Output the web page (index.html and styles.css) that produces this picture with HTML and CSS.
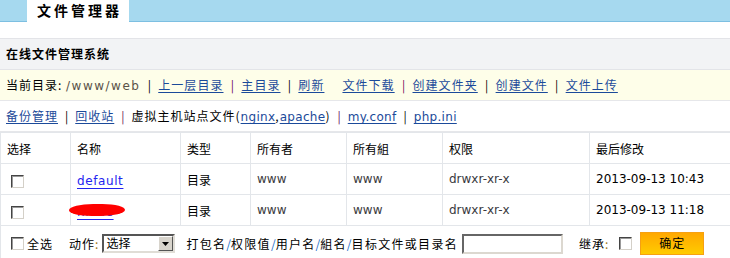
FILE: index.html
```html
<!DOCTYPE html>
<html lang="zh">
<head>
<meta charset="utf-8">
<title>文件管理器</title>
<link rel="stylesheet" href="styles.css">
</head>
<body>
<div class="topbar">
  <div class="tab">文件管理器</div>
</div>
<div class="spacer"></div>
<div class="title">在线文件管理系统</div>
<div class="nav nav-yellow">
  <span class="label">当前目录:</span>&nbsp;<span class="path">/www/web</span><span class="sep">|</span><a href="#">上一层目录</a><span class="sep purple">|</span><a href="#">主目录</a><span class="sep">|</span><a href="#">刷新</a><span class="gap"></span><a href="#">文件下载</a><span class="sep purple">|</span><a href="#">创建文件夹</a><span class="sep">|</span><a href="#">创建文件</a><span class="sep">|</span><a href="#">文件上传</a>
</div>
<div class="nav">
  <a href="#">备份管理</a><span class="sep">|</span><a href="#">回收站</a><span class="sep purple">|</span><span class="label">虚拟主机站点文件(</span><a href="#" class="latin">nginx</a><span class="label">,</span><a href="#" class="latin">apache</a><span class="label">)</span><span class="sep purple">|</span><a href="#" class="latin">my.conf</a><span class="sep">|</span><a href="#" class="latin">php.ini</a>
</div>
<table class="files">
  <colgroup>
    <col class="c1"><col class="c2"><col class="c3"><col class="c4"><col class="c5"><col class="c6"><col class="c7">
  </colgroup>
  <thead>
    <tr><th>选择</th><th>名称</th><th>类型</th><th>所有者</th><th>所有組</th><th>权限</th><th>最后修改</th></tr>
  </thead>
  <tbody>
    <tr>
      <td class="chk"><span class="cb"></span></td>
      <td><a href="#" class="fname">default</a></td>
      <td>目录</td>
      <td class="latin gray">www</td>
      <td class="latin gray">www</td>
      <td class="latin gray">drwxr-xr-x</td>
      <td class="latin">2013-09-13 10:43</td>
    </tr>
    <tr>
      <td class="chk"><span class="cb"></span></td>
      <td class="redact-cell"><a href="#" class="fname">hidde</a><span class="blob"></span></td>
      <td>目录</td>
      <td class="latin gray">www</td>
      <td class="latin gray">www</td>
      <td class="latin gray">drwxr-xr-x</td>
      <td class="latin">2013-09-13 11:18</td>
    </tr>
    <tr class="footer">
      <td colspan="7">
        <div class="actions">
          <span class="cb"></span><span class="txt all">全选</span>
          <span class="txt act">动作<span class="colon">:</span></span>
          <span class="select"><span class="sel-text">选择</span><span class="sel-btn"><svg width="7" height="4" viewBox="0 0 7 4"><path d="M0 0h7L3.5 4z" fill="#000"/></svg></span></span>
          <span class="txt hint">打包名<i>/</i>权限值<i>/</i>用户名<i>/</i>組名<i>/</i>目标文件或目录名</span>
          <span class="input"></span>
          <span class="txt inherit">继承<span class="colon">:</span></span>
          <span class="cb"></span>
          <span class="btn">确定</span>
        </div>
      </td>
    </tr>
  </tbody>
</table>
</body>
</html>
```

FILE: styles.css
```css
* { box-sizing: border-box; }
html, body { margin: 0; padding: 0; background: #fff; }
body {
  width: 730px;
  font-family: "Noto Sans CJK SC", "DejaVu Sans", sans-serif;
  font-size: 12px;
  color: #000;
  overflow: hidden;
}
a { color: #1b4a9a; text-decoration: underline; text-underline-offset: 2px; }

.topbar {
  height: 22px;
  background: #a6d9ef;
  border-bottom: 1px solid #7dbfe1;
  display: flex;
  align-items: flex-start;
  padding-left: 27px;
}
.tab {
  background: #fff;
  width: 102px;
  height: 22px;
  font-weight: bold;
  font-size: 14px;
  letter-spacing: 3px;
  line-height: 20px;
  padding-left: 10px;
}
.spacer { height: 16px; }
.title {
  height: 32px;
  background: #f2f3f5;
  border-top: 1px solid #e3e4e8;
  border-bottom: 1px solid #e3e4e8;
  font-weight: bold;
  line-height: 29px;
  padding-left: 6px;
  letter-spacing: 1px;
}
.nav {
  height: 31px;
  line-height: 30px;
  padding-left: 6px;
  letter-spacing: 1px;
  white-space: nowrap;
  border-bottom: 1px solid #e6e7ea;
}
.nav-yellow { background: #fefee9; }
.nav-yellow a { letter-spacing: 1.05px; }
.nav .path { font-family: "DejaVu Sans", sans-serif; color: #5a5248; letter-spacing: 1.5px; }
.nav .latin { font-family: "DejaVu Sans", sans-serif; letter-spacing: 0.3px; }
.sep { display: inline-block; margin: 0 7px; color: #000; letter-spacing: 0; }
.nav-yellow .sep { margin: 0 7.3px; }
.sep.purple { color: #6a0a5a; }
.gap { display: inline-block; width: 18px; }

.files {
  width: 730px;
  border-collapse: collapse;
  table-layout: fixed;
  border-left: 1px solid #e3e6ea;
}
.c1 { width: 70px; } .c2 { width: 110px; } .c3 { width: 70px; }
.c4 { width: 96px; } .c5 { width: 96px; } .c6 { width: 147px; } .c7 { width: 141px; }
.files th, .files td {
  border: 1px solid #e3e6ea;
  border-left: 0;
  height: 31px;
  padding: 0 0 0 6px;
  text-align: left;
  font-weight: normal;
  white-space: nowrap;
  vertical-align: middle;
}
.files td:last-child, .files th:last-child { border-right: 0; }
.latin { font-family: "DejaVu Sans", sans-serif; font-size: 12px; }
.gray { color: #3a3a40; }
.fname { color: #2323f0; font-family: "DejaVu Sans", sans-serif; letter-spacing: 0.6px; text-underline-offset: 3px; }
.chk { padding-left: 10px !important; }
.cb {
  display: inline-block;
  width: 13px;
  height: 13px;
  border: 1px solid;
  border-color: #444 #d4d0c8 #d4d0c8 #444;
  background: #fff;
  vertical-align: middle;
  box-shadow: inset 1px 1px 0 #999;
}
.redact-cell { position: relative; }
.blob {
  position: absolute;
  left: -2px;
  top: 9px;
  width: 56px;
  height: 12px;
  background: #ff0000;
  border-radius: 50% / 60%;
  transform: skewX(-8deg);
}
.files tr.footer td {
  height: 36px;
  border-bottom: 0;
  padding: 0 0 0 10px;
}
.actions {
  display: flex;
  align-items: center;
  white-space: nowrap;
}
.txt { letter-spacing: 1px; }
.all { margin-left: 3px; }
.act { margin-left: 16px; }
.colon { color: #a07a20; }
.select {
  margin-left: 3px;
  width: 73px;
  height: 19px;
  display: inline-flex;
  align-items: stretch;
  border: 2px solid;
  border-color: #555 #e0ddd6 #e0ddd6 #555;
  background: #fff;
}
.sel-text { flex: 1; line-height: 14px; padding-left: 2px; font-size: 12px; }
.sel-btn {
  width: 15px;
  background: #d8d4cc;
  border: 1px solid;
  border-color: #fff #555 #555 #fff;
  display: flex;
  align-items: center;
  justify-content: center;
}
.hint { margin-left: 11px; letter-spacing: 1.3px; }
.hint i { font-style: normal; color: #1a6ec8; letter-spacing: 0; }
.input {
  margin-left: 4px;
  width: 101px;
  height: 20px;
  border: 2px solid;
  border-color: #666 #dcd8d0 #dcd8d0 #666;
  background: #fff;
}
.inherit { margin-left: 16px; }
.inherit + .cb { margin-left: 10px; }
.btn {
  margin-left: 8px;
  width: 64px;
  height: 23px;
  background: linear-gradient(#ffa800, #ffcb00);
  border: 1px solid #f6a012;
  text-align: center;
  line-height: 20px;
  letter-spacing: 1px;
}
```
